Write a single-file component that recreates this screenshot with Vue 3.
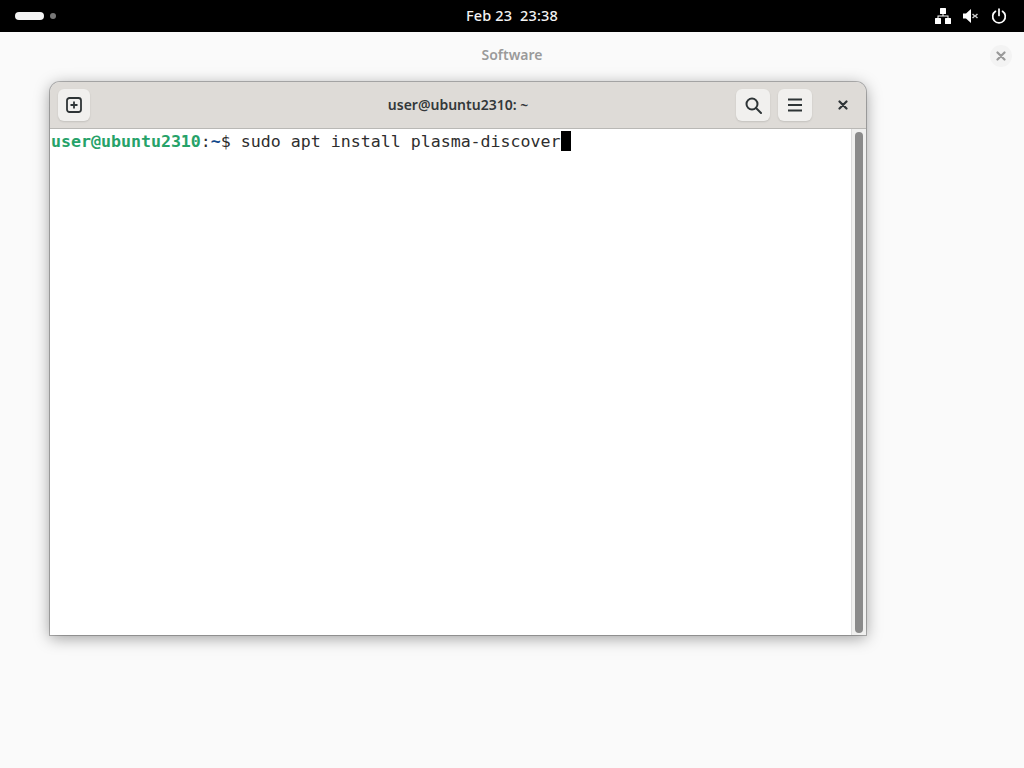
<template>
  <div class="screen">
    <header class="panel">
      <div class="workspaces">
        <span class="ws-active"></span>
        <span class="ws-dot"></span>
      </div>
      <div class="clock">Feb 23&nbsp; 23:38</div>
      <div class="tray">
        <svg width="16" height="16" viewBox="0 0 16 16" fill="#fff">
          <rect x="5" y="0" width="6" height="6" rx="0.5" />
          <rect x="0" y="10" width="6" height="6" rx="0.5" />
          <rect x="10" y="10" width="6" height="6" rx="0.5" />
          <path d="M7.500 6h1v1.500H13.500V10h-1V8.500h-9V10h-1V7.500h5z" />
        </svg>
        <svg width="16" height="14" viewBox="0 0 16 14" fill="#fff">
          <path d="M0 4.500h3L8 0v14L3 9.500H0z" />
          <path d="M10 4.500l2 1.700 2-1.700 1 1L13.200 7 15 8.500l-1 1-2-1.700-2 1.700-1-1L10.800 7 9 5.500z" opacity="0.8" />
        </svg>
        <svg width="16" height="16" viewBox="0 0 16 16" fill="none" stroke="#fff" stroke-width="1.700" stroke-linecap="round">
          <path d="M8 1v6.500" />
          <path d="M4.500 3.300a6.300 6.300 0 1 0 7 0" />
        </svg>
      </div>
    </header>

    <main class="overview">
      <div class="app-title">Software</div>
      <button class="dismiss" aria-label="Close">
        <svg width="10" height="10" viewBox="0 0 10 10" stroke="#999" stroke-width="2.200" stroke-linecap="round">
          <path d="M1.500 1.500l7 7M8.500 1.500l-7 7" />
        </svg>
      </button>

      <section class="window">
        <div class="titlebar">
          <button class="tool new-tab">
            <svg width="16" height="16" viewBox="0 0 16 16" fill="none" stroke="#2e3436" stroke-width="1.800">
              <rect x="1" y="1" width="14" height="14" rx="2.500" />
              <path d="M8 4.500v7M4.500 8h7" />
            </svg>
          </button>
          <div class="title">user@ubuntu2310: ~</div>
          <div class="actions">
            <button class="tool">
              <svg width="17" height="17" viewBox="0 0 17 17" fill="none" stroke="#2e3436" stroke-width="2">
                <circle cx="7" cy="7" r="5.500" />
                <path d="M11 11l5 5" stroke-linecap="round" />
              </svg>
            </button>
            <button class="tool">
              <svg width="16" height="14" viewBox="0 0 16 14" fill="#2e3436">
                <rect x="1" y="0.500" width="14" height="2" />
                <rect x="1" y="6" width="14" height="2" />
                <rect x="1" y="11.500" width="14" height="2" />
              </svg>
            </button>
            <button class="close-btn" aria-label="Close window">
              <svg width="10" height="10" viewBox="0 0 10 10" stroke="#2e3436" stroke-width="2.200" stroke-linecap="round">
                <path d="M1.500 1.500l7 7M8.500 1.500l-7 7" />
              </svg>
            </button>
          </div>
        </div>
        <div class="term-body">
          <div class="term"><span class="user">user@ubuntu2310</span>:<span class="path">~</span>$ sudo apt install plasma-discover<span class="cursor"></span></div>
          <div class="scrollbar"><div class="thumb"></div></div>
        </div>
      </section>
    </main>
  </div>
</template>

<script setup>
</script>

<style>
html, body { margin: 0; background: #fafafa; }
</style>

<style scoped>
.screen {
  width: 1024px;
  height: 768px;
  display: flex;
  flex-direction: column;
  overflow: hidden;
  font-family: "Noto Sans", "Open Sans", sans-serif;
}
.panel {
  height: 32px;
  flex: none;
  background: #000;
  color: #f2f2f2;
  display: grid;
  grid-template-columns: 1fr auto 1fr;
  align-items: center;
  padding: 0 17px 0 15px;
}
.workspaces { display: flex; align-items: center; gap: 6px; }
.ws-active { width: 29px; height: 8px; border-radius: 4px; background: #f4f4f4; }
.ws-dot { width: 6px; height: 6px; border-radius: 50%; background: #777; }
.clock { font-size: 14.5px; font-weight: 500; letter-spacing: 0.15px; padding: 0 0 2px 2px; }
.tray { display: flex; justify-content: flex-end; align-items: center; gap: 12px; }
.overview {
  position: relative;
  flex: 1;
  background: #fafafa;
  padding: 50px 0 0 50px;
}
.app-title {
  position: absolute;
  top: 13px;
  left: 0;
  right: 0;
  text-align: center;
  color: #9a9a9a;
  font-size: 14px;
  font-weight: 600;
}
.dismiss {
  position: absolute;
  top: 13px;
  right: 12px;
  width: 22px;
  height: 22px;
  border: 0;
  padding: 0;
  border-radius: 50%;
  background: #f3f3f3;
  display: flex;
  align-items: center;
  justify-content: center;
}
.window {
  width: 816px;
  height: 553px;
  display: flex;
  flex-direction: column;
  border-radius: 10px 10px 0 0;
  overflow: hidden;
  box-shadow: 0 0 0 1px rgba(0,0,0,0.25), 0 3px 16px rgba(0,0,0,0.38);
}
.titlebar {
  height: 47px;
  box-sizing: border-box;
  flex: none;
  display: grid;
  grid-template-columns: 1fr auto 1fr;
  align-items: center;
  background: #dedbd7;
  border-bottom: 1px solid #b9b8b5;
  padding: 0 8px;
}
.title {
  font-size: 14px;
  font-weight: 600;
  color: #33383a;
  padding-bottom: 2px;
}
.actions { display: flex; justify-content: flex-end; align-items: center; gap: 8px; }
.tool {
  width: 34px;
  height: 32px;
  border: 0;
  padding: 0;
  border-radius: 6px;
  background: #f1f0ee;
  box-shadow: 0 1px 2px rgba(0,0,0,0.12);
  display: flex;
  align-items: center;
  justify-content: center;
}
.new-tab { width: 32px; }
.close-btn {
  width: 38px;
  height: 32px;
  border: 0;
  padding: 0 0 0 8px;
  background: transparent;
  display: flex;
  align-items: center;
  justify-content: center;
}
.term-body {
  flex: 1;
  display: flex;
  background: #fff;
  min-height: 0;
}
.term {
  flex: 1;
  padding: 2px 0 0 1px;
  font-family: "DejaVu Sans Mono", "Liberation Mono", monospace;
  font-size: 16.6px;
  line-height: 22px;
  color: #2e2e2e;
  white-space: pre;
}
.user { color: #26a269; font-weight: 700; }
.path { color: #12488b; font-weight: 700; }
.cursor {
  display: inline-block;
  width: 10px;
  height: 20px;
  background: #000;
  vertical-align: top;
}
.scrollbar {
  width: 15px;
  flex: none;
  background: #f0f0ef;
  border-left: 1px solid #dcdcdc;
  box-sizing: border-box;
  padding: 3px 3px 2px 3px;
  display: flex;
}
.thumb {
  flex: 1;
  background: #8a8a8a;
  border-radius: 4px;
}
</style>
